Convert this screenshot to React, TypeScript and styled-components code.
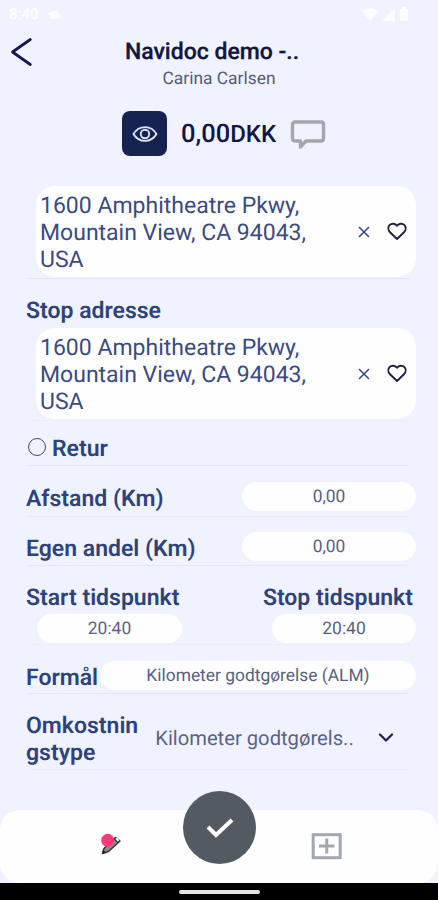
import React from 'react';
import styled, { createGlobalStyle } from 'styled-components';

const GlobalStyle = createGlobalStyle`
  * { box-sizing: border-box; }
  body {
    margin: 0;
    background: #f0f3ff;
    font-family: Roboto, "Liberation Sans", sans-serif;
    text-rendering: geometricPrecision;
  }
`;

const Screen = styled.div`
  width: 438px;
  height: 900px;
  display: flex;
  flex-direction: column;
  overflow: hidden;
  background: #f0f3ff;
  color: #2b3f77;
`;

const StatusBar = styled.div`
  height: 28px;
  padding: 0 29px 0 9px;
  display: flex;
  align-items: center;
  justify-content: space-between;
  color: #fcfdff;
  font-size: 15px;
  font-weight: 500;
`;

const StatusGroup = styled.div<{ $gap: number }>`
  display: flex;
  align-items: center;
  gap: ${(p) => p.$gap}px;
`;

const Header = styled.header`
  height: 66px;
  display: grid;
  grid-template-columns: 44px 1fr 44px;
  padding-right: 14px;
`;

const BackButton = styled.button`
  border: 0;
  background: none;
  padding: 9px 0 0 10px;
  height: 40px;
  display: flex;
  justify-content: flex-start;
`;

const Titles = styled.div`
  display: flex;
  flex-direction: column;
  align-items: center;
`;

const Title = styled.h1`
  margin: 10px 0 0;
  font-size: 23px;
  line-height: 28px;
  font-weight: 500;
  color: #13163f;
  -webkit-text-stroke: 0.3px #13163f;
`;

const Subtitle = styled.div`
  margin: 2px 0 0 14px;
  font-size: 17.4px;
  line-height: 22px;
  color: #565b77;
`;

const AmountRow = styled.section`
  height: 92px;
  padding: 17px 0 0 122px;
  display: flex;
  align-items: flex-start;
`;

const EyeButton = styled.button`
  width: 45px;
  height: 45px;
  border: 0;
  border-radius: 8px;
  background: #152252;
  padding: 0;
  display: flex;
  align-items: center;
  justify-content: center;
`;

const Amount = styled.div`
  margin-left: 14px;
  width: 96px;
  font-size: 25.5px;
  line-height: 46px;
  font-weight: 500;
  color: #13163f;
  white-space: nowrap;
`;

const Currency = styled.span`
  font-size: 24px;
`;

const CommentIcon = styled.svg`
  margin: 8px 0 0 13px;
`;

const Form = styled.main`
  flex: 1;
  display: flex;
  flex-direction: column;
`;

const AddressCard = styled.div`
  width: 380px;
  height: 91px;
  margin: 0 0 1px 36px;
  padding: 0 9px 0 4px;
  display: flex;
  align-items: center;
  border-radius: 19px;
  background: #fefeff;
`;

const AddressText = styled.div`
  flex: 1;
  padding-top: 2px;
  font-size: 23px;
  line-height: 27px;
  color: #3c4a80;
`;

const CardActions = styled.div`
  display: flex;
  align-items: center;
  gap: 17px;
`;

const Divider = styled.div<{ $faint?: boolean }>`
  width: 380px;
  height: 1px;
  margin-left: 29px;
  background: ${(p) => (p.$faint ? '#e9eefb' : '#e1e7f8')};
`;

const Label = styled.span`
  font-size: 23px;
  line-height: 27px;
  font-weight: 600;
  color: #2e4379;
  white-space: pre-line;
`;

const LabelRow = styled.div`
  height: 49px;
  padding: 18px 0 0 26px;
`;

const Row = styled.div<{ $height: number; $top?: number }>`
  height: ${(p) => p.$height}px;
  padding: ${(p) => p.$top ?? 0}px 22px 0 26px;
  display: flex;
  align-items: center;
  justify-content: space-between;

  > ${Label} { padding-top: 3px; }
`;

const CheckRow = styled.div`
  height: 44px;
  padding: 11px 0 0 28px;
  display: flex;
  align-items: center;
  gap: 6px;
`;

const Radio = styled.span`
  width: 18px;
  height: 18px;
  margin-top: -4px;
  border: 1.5px solid #3f4870;
  border-radius: 50%;
`;

const Pill = styled.div<{ $width: number }>`
  width: ${(p) => p.$width}px;
  height: 29px;
  border-radius: 15px;
  background: #fefeff;
  text-align: center;
  font-size: 17.4px;
  line-height: 31px;
  color: #596080;
`;

const TimeRow = styled.div`
  height: 78px;
  padding: 18px 22px 0 26px;
  display: flex;
  justify-content: space-between;
`;

const TimeField = styled.div<{ $end?: boolean }>`
  display: flex;
  flex-direction: column;
  gap: 3px;
  align-items: ${(p) => (p.$end ? 'flex-end' : 'flex-start')};

  ${Label} { margin-right: ${(p) => (p.$end ? 3 : 0)}px; }
  ${Pill} { margin-left: 11px; }
`;

const SelectValue = styled.div`
  flex: 1;
  margin-left: 17px;
  padding-top: 2px;
  font-size: 20.2px;
  line-height: 27px;
  color: #596389;
  white-space: nowrap;
`;

const Chevron = styled.svg`
  margin-right: 22px;
`;

const BottomBar = styled.nav`
  position: relative;
  height: 73px;
  padding: 23px 95px 0 100px;
  display: flex;
  justify-content: space-between;
  border-radius: 20px;
  background: #fefeff;
`;

const ConfirmButton = styled.button`
  position: absolute;
  left: 183px;
  top: -19px;
  width: 73px;
  height: 73px;
  border: 0;
  padding: 0;
  border-radius: 50%;
  background: #535a62;
  display: flex;
  align-items: center;
  justify-content: center;
`;

const SystemBar = styled.div`
  height: 17px;
  background: #000;
  display: flex;
  justify-content: center;
  padding-top: 7px;
`;

const HomeIndicator = styled.div`
  width: 81px;
  height: 4px;
  border-radius: 2px;
  background: #e6e6e6;
`;

function Address() {
  return (
    <AddressCard>
      <AddressText>
        1600 Amphitheatre Pkwy,<br />
        Mountain View, CA 94043,<br />
        USA
      </AddressText>
      <CardActions>
        <svg width="12" height="12" viewBox="0 0 12 12" stroke="#3c4a83" strokeWidth="1.6">
          <path d="M1 1l10 10M11 1L1 11" />
        </svg>
        <svg width="20" height="19" viewBox="0 0 20 19" fill="none" stroke="#20213d" strokeWidth="1.9" strokeLinejoin="round">
          <path d="M10 17L3 10.200C.8 8.100 1 5 2.500 3.200 4.600 1 8.200 1.200 10 3.800 11.800 1.200 15.400 1 17.500 3.200 19 5 19.200 8.100 17 10.200z" />
        </svg>
      </CardActions>
    </AddressCard>
  );
}

export default function App() {
  return (
    <Screen>
      <GlobalStyle />
      <StatusBar>
        <StatusGroup $gap={8}>
          <span>8:40</span>
          <svg width="14" height="13" viewBox="0 0 14 13" fill="currentColor">
            <path d="M1 5h3a4 4 0 0 1 7-1 4 4 0 0 1 1 7H4z" />
          </svg>
        </StatusGroup>
        <StatusGroup $gap={4}>
          <svg width="16" height="13" viewBox="0 0 16 13" fill="currentColor">
            <path d="M8 13L0 3Q8-3 16 3z" />
          </svg>
          <svg width="13" height="13" viewBox="0 0 13 13" fill="currentColor">
            <path d="M13 0v13H0z" />
          </svg>
          <svg width="10" height="14" viewBox="0 0 10 14" fill="currentColor">
            <path d="M3 0h4v2h2v12H1V2h2z" />
          </svg>
        </StatusGroup>
      </StatusBar>
      <Header>
        <BackButton aria-label="Tilbage">
          <svg width="23" height="30" viewBox="0 0 23 30" fill="none" stroke="#17194d" strokeWidth="2.8" strokeLinecap="round" strokeLinejoin="round">
            <path d="M20.3 2.5L2.5 15l17.8 12.5" />
          </svg>
        </BackButton>
        <Titles>
          <Title>Navidoc demo -..</Title>
          <Subtitle>Carina Carlsen</Subtitle>
        </Titles>
      </Header>
      <AmountRow>
        <EyeButton aria-label="Vis">
          <svg width="26" height="18" viewBox="0 0 26 18" fill="none" stroke="#dfe2f1" strokeWidth="1.9">
            <path d="M1.500 9C7-.2 19-.2 24.500 9 19 18.200 7 18.200 1.500 9z" />
            <circle cx="13" cy="9" r="4.200" />
          </svg>
        </EyeButton>
        <Amount>0,00<Currency>DKK</Currency></Amount>
        <CommentIcon width="36" height="32" viewBox="0 0 36 32" fill="none" stroke="#a5a6ac" strokeWidth="3.4" strokeLinejoin="round">
          <path d="M5 3h26q2.500 0 2.500 2.500v14q0 2.500-2.500 2.500H16l-5.500 6v-6H5q-2.500 0-2.500-2.500v-14Q2.500 3 5 3z" />
        </CommentIcon>
      </AmountRow>
      <Form>
        <Address />
        <Divider />
        <LabelRow><Label>Stop adresse</Label></LabelRow>
        <Address />
        <Divider $faint />
        <CheckRow>
          <Radio />
          <Label>Retur</Label>
        </CheckRow>
        <Divider />
        <Row $height={50} $top={11}>
          <Label>Afstand (Km)</Label>
          <Pill $width={174}>0,00</Pill>
        </Row>
        <Divider />
        <Row $height={48} $top={11}>
          <Label>Egen andel (Km)</Label>
          <Pill $width={174}>0,00</Pill>
        </Row>
        <Divider />
        <TimeRow>
          <TimeField>
            <Label>Start tidspunkt</Label>
            <Pill $width={145}>20:40</Pill>
          </TimeField>
          <TimeField $end>
            <Label>Stop tidspunkt</Label>
            <Pill $width={144}>20:40</Pill>
          </TimeField>
        </TimeRow>
        <Divider $faint />
        <Row $height={48} $top={13}>
          <Label>Formål</Label>
          <Pill $width={316}>Kilometer godtgørelse (ALM)</Pill>
        </Row>
        <Divider />
        <Row $height={75} $top={12}>
          <Label>{'Omkostnin\ngstype'}</Label>
          <SelectValue>Kilometer godtgørels..</SelectValue>
          <Chevron width="16" height="10" viewBox="0 0 16 10" fill="none" stroke="#201d52" strokeWidth="2.200" strokeLinecap="round" strokeLinejoin="round">
            <path d="M2 1.500l6 6 6-6" />
          </Chevron>
        </Row>
        <Divider $faint />
      </Form>
      <BottomBar>
        <svg width="22" height="23" viewBox="0 0 22 23">
          <path d="M2.500 20.500l1.500-5L15.500 4.500l4.500 3.500L8.500 18.500z" fill="#8d8d91" stroke="#333438" strokeWidth="1.500" strokeLinejoin="round" />
          <path d="M14 5.500l4 4" stroke="#333438" strokeWidth="1.300" />
          <path d="M15.500 6l1.500-1.300 2.300 2.500-1.500 1.400z" fill="#fff" />
          <path d="M2 21l1-4 3 2.500z" fill="#222" />
          <circle cx="7.700" cy="7.300" r="6.500" fill="#fc397d" />
        </svg>
        <svg width="32" height="27" viewBox="0 0 32 27" fill="none" stroke="#a2a7b0">
          <rect x="2.200" y="1.700" width="27" height="23" strokeWidth="3" />
          <path d="M8 13h15.500M15.750 5.500v15" strokeWidth="3" />
        </svg>
        <ConfirmButton aria-label="Bekræft">
          <svg width="28" height="22" viewBox="0 0 28 22" fill="none" stroke="#fff" strokeWidth="4">
            <path d="M2 10l8 8L26 3" />
          </svg>
        </ConfirmButton>
      </BottomBar>
      <SystemBar><HomeIndicator /></SystemBar>
    </Screen>
  );
}
